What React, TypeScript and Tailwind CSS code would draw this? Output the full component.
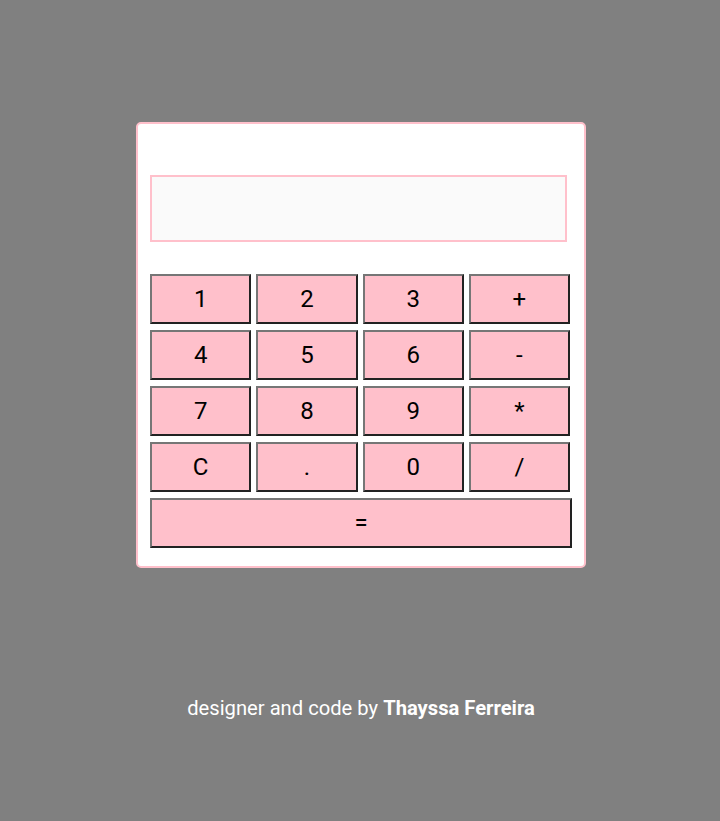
import React from 'react';

const keys = ['1', '2', '3', '+', '4', '5', '6', '-', '7', '8', '9', '*', 'C', '.', '0', '/'];

const btn =
    'h-[50px] bg-[#ffc0cb] text-black text-[24px] border-2 border-t-[#767676] border-l-[#767676] border-b-[#222] border-r-[#222] flex items-center justify-center';

export default function App() {
    return (
        <div
            className="min-h-screen bg-[#808080] flex flex-col items-center pt-[122px]"
            style={{ fontFamily: 'Roboto, "Liberation Sans", sans-serif' }}
        >
            <div className="w-[450px] h-[446px] ml-[2px] bg-white border-2 border-[#ffc0cb] rounded-[5px] pl-[12px] pt-[51px]">
                <div className="w-[417px] h-[67px] bg-[#fafafa] border-2 border-[#ffc0cb]"></div>

                <div className="mt-[32px] w-[420px] grid grid-cols-4 gap-x-[5px] gap-y-[6px]">
                    {keys.map((k) => (
                        <button key={k} className={btn}>
                            {k}
                        </button>
                    ))}
                    <button className={`${btn} col-span-4 w-[422px]`}>=</button>
                </div>
            </div>

            <p className="mt-[126px] ml-[2px] text-white text-[20.2px] leading-[28px]">
                designer and code by <span className="font-bold">Thayssa Ferreira</span>
            </p>
        </div>
    );
}
